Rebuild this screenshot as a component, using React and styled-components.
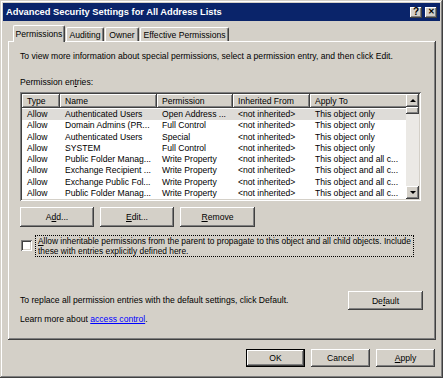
import React from 'react';
import styled, { createGlobalStyle, css } from 'styled-components';

const GlobalStyle = createGlobalStyle`
  body {
    margin: 0;
    background: #d4d0c8;
    font-family: 'Liberation Sans', Arial, sans-serif;
  }
`;

const raised = css`
  box-shadow: inset -1px -1px #404040, inset 1px 1px #ffffff, inset -2px -2px #808080, inset 2px 2px #d4d0c8;
`;

const sunken = css`
  box-shadow: inset 1px 1px #808080, inset -1px -1px #ffffff, inset 2px 2px #404040, inset -2px -2px #d4d0c8;
`;

const rows = [
  ['Allow', 'Authenticated Users', 'Open Address ...', '<not inherited>', 'This object only'],
  ['Allow', 'Domain Admins (PR...', 'Full Control', '<not inherited>', 'This object only'],
  ['Allow', 'Authenticated Users', 'Special', '<not inherited>', 'This object only'],
  ['Allow', 'SYSTEM', 'Full Control', '<not inherited>', 'This object only'],
  ['Allow', 'Public Folder Manag...', 'Write Property', '<not inherited>', 'This object and all c...'],
  ['Allow', 'Exchange Recipient ...', 'Write Property', '<not inherited>', 'This object and all c...'],
  ['Allow', 'Exchange Public Fol...', 'Write Property', '<not inherited>', 'This object and all c...'],
  ['Allow', 'Public Folder Manag...', 'Write Property', '<not inherited>', 'This object and all c...'],
  ['Allow', 'Exchange Recipient ...', 'Write Property', '<not inherited>', 'This object and all c...'],
];

const columns = [
  { label: 'Type', width: 38 },
  { label: 'Name', width: 97 },
  { label: 'Permission', width: 76 },
  { label: 'Inherited From', width: 77 },
  { label: 'Apply To', width: 98 },
];

const tabs = [
  { label: 'Permissions', width: 52, active: true },
  { label: 'Auditing', width: 38 },
  { label: 'Owner', width: 34 },
  { label: 'Effective Permissions', width: 89 },
];

const App = () => {
  return (
    <>
      <GlobalStyle />
      <Window>
        <TitleBar>
          <TitleText>Advanced Security Settings for All Address Lists</TitleText>
          <TitleButtons>
            <CaptionBtn>?</CaptionBtn>
            <CaptionBtn $close>✕</CaptionBtn>
          </TitleButtons>
        </TitleBar>

        <TabRow>
          {tabs.map((t) => (
            <Tab key={t.label} $active={t.active} $w={t.width}>
              {t.label}
            </Tab>
          ))}
        </TabRow>

        <Panel>
          <InfoText>
            To view more information about special permissions, select a permission entry, and then click Edit.
          </InfoText>
          <Label>
            Permission en<u>t</u>ries:
          </Label>

          <ListBox>
            <ListInner>
              <HeaderRow>
                {columns.map((c) => (
                  <HeaderCell key={c.label} $w={c.width}>
                    {c.label}
                  </HeaderCell>
                ))}
              </HeaderRow>
              <Rows>
                {rows.map((r, i) => (
                  <Row key={i} $selected={i === 0}>
                    {r.map((cell, j) => (
                      <Cell key={j} $w={columns[j].width}>
                        {cell}
                      </Cell>
                    ))}
                  </Row>
                ))}
              </Rows>
            </ListInner>
            <ScrollBar>
              <ScrollBtn>
                <Arrow $up />
              </ScrollBtn>
              <Thumb />
              <Track />
              <ScrollBtn>
                <Arrow />
              </ScrollBtn>
            </ScrollBar>
          </ListBox>

          <ButtonRow>
            <Button $w={74}>
              A<u>d</u>d...
            </Button>
            <Button $w={74}>
              <u>E</u>dit...
            </Button>
            <Button $w={75}>
              <u>R</u>emove
            </Button>
          </ButtonRow>

          <CheckRow>
            <CheckBox />
            <FocusLabel>
              <Line>
                <u>A</u>llow inheritable permissions from the parent to propagate to this object and all child objects. Include
              </Line>
              <Line>these with entries explicitly defined here.</Line>
            </FocusLabel>
          </CheckRow>

          <DefaultRow>
            <PlainText>To replace all permission entries with the default settings, click Default.</PlainText>
            <Button $w={75} $h={19}>
              De<u>f</u>ault
            </Button>
          </DefaultRow>

          <PlainText>
            Learn more about <Link>access control</Link>.
          </PlainText>
        </Panel>

        <Footer>
          <Button $w={59} $h={18} $default>
            OK
          </Button>
          <Button $w={59} $h={18}>
            Cancel
          </Button>
          <Button $w={59} $h={18}>
            <u>A</u>pply
          </Button>
        </Footer>
      </Window>
    </>
  );
};

export default App;

const Window = styled.div`
  width: 443px;
  height: 378px;
  box-sizing: border-box;
  padding: 3px;
  background: #d4d0c8;
  display: flex;
  flex-direction: column;
  font-size: 8.6px;
  color: #000;
  box-shadow: inset -1px -1px #404040, inset 1px 1px #d4d0c8, inset -2px -2px #808080, inset 2px 2px #ffffff;
`;

const TitleBar = styled.div`
  height: 18px;
  background: #0a246a;
  display: flex;
  align-items: center;
  justify-content: space-between;
  padding: 0 3px 0 3px;
`;

const TitleText = styled.span`
  color: #fff;
  font-weight: bold;
  font-size: 9.3px;
`;

const TitleButtons = styled.div`
  display: flex;
  gap: 3px;
`;

const CaptionBtn = styled.div`
  width: 12px;
  height: 11px;
  background: #d4d0c8;
  ${raised};
  display: flex;
  align-items: center;
  justify-content: center;
  font-weight: bold;
  font-size: ${({ $close }) => ($close ? '8px' : '10px')};
  line-height: 1;
`;

const TabRow = styled.div`
  display: flex;
  align-items: flex-end;
  height: 18px;
  margin-top: 2px;
  padding-left: 10px;
  position: relative;
  z-index: 1;
`;

const Tab = styled.div`
  width: ${({ $w }) => $w}px;
  height: ${({ $active }) => ($active ? 17 : 14)}px;
  margin-right: 1px;
  margin-bottom: ${({ $active }) => ($active ? -1 : 0)}px;
  box-sizing: border-box;
  background: #d4d0c8;
  border-top: 1px solid #fff;
  border-left: 1px solid #fff;
  border-right: 1px solid #404040;
  box-shadow: inset -1px 0 #808080;
  border-radius: 2px 2px 0 0;
  display: flex;
  align-items: center;
  justify-content: center;
  white-space: nowrap;
`;

const Panel = styled.div`
  margin: 0 4px 0 5px;
  height: 299px;
  box-sizing: border-box;
  padding: 10px 13px 0 12px;
  background: #d4d0c8;
  box-shadow: inset -1px -1px #404040, inset 1px 1px #ffffff, inset -2px -2px #808080;
  display: flex;
  flex-direction: column;
`;

const InfoText = styled.div`
  line-height: 11px;
  white-space: nowrap;
`;

const Label = styled.div`
  margin-top: 15px;
  line-height: 11px;
`;

const ListBox = styled.div`
  margin-top: 4px;
  width: 401px;
  height: 109px;
  box-sizing: border-box;
  padding: 2px;
  background: #fff;
  ${sunken};
  display: flex;
  overflow: hidden;
`;

const ListInner = styled.div`
  flex: 1;
  display: flex;
  flex-direction: column;
  overflow: hidden;
`;

const HeaderRow = styled.div`
  display: flex;
  height: 14px;
  flex-shrink: 0;
`;

const HeaderCell = styled.div`
  width: ${({ $w }) => $w}px;
  flex-shrink: 0;
  box-sizing: border-box;
  background: #d4d0c8;
  ${raised};
  padding-left: 5px;
  line-height: 14px;
  white-space: nowrap;
`;

const Rows = styled.div`
  padding-top: 1px;
`;

const Row = styled.div`
  display: flex;
  height: 11.3px;
  background: ${({ $selected }) => ($selected ? '#dedcd8' : 'transparent')};
`;

const Cell = styled.div`
  width: ${({ $w }) => $w}px;
  flex-shrink: 0;
  box-sizing: border-box;
  padding-left: 5px;
  line-height: 11.3px;
  white-space: nowrap;
  overflow: hidden;
`;

const ScrollBar = styled.div`
  width: 13px;
  flex-shrink: 0;
  display: flex;
  flex-direction: column;
  background: #ebe9e5;
`;

const ScrollBtn = styled.div`
  height: 13px;
  flex-shrink: 0;
  background: #d4d0c8;
  ${raised};
  display: flex;
  align-items: center;
  justify-content: center;
`;

const Arrow = styled.div`
  width: 0;
  height: 0;
  border-left: 3px solid transparent;
  border-right: 3px solid transparent;
  ${({ $up }) => ($up ? 'border-bottom: 3px solid #000;' : 'border-top: 3px solid #000;')}
`;

const Thumb = styled.div`
  height: 7px;
  flex-shrink: 0;
  background: #d4d0c8;
  ${raised};
`;

const Track = styled.div`
  flex: 1;
`;

const ButtonRow = styled.div`
  display: flex;
  gap: 6px;
  margin-top: 6px;
`;

const Button = styled.div`
  width: ${({ $w }) => $w}px;
  height: ${({ $h }) => $h || 20}px;
  flex-shrink: 0;
  box-sizing: border-box;
  background: #d4d0c8;
  ${raised};
  ${({ $default }) =>
    $default &&
    css`
      border: 1px solid #000;
      box-shadow: inset -1px -1px #404040, inset 1px 1px #ffffff, inset -2px -2px #808080;
    `}
  display: flex;
  align-items: center;
  justify-content: center;
`;

const CheckRow = styled.div`
  display: flex;
  align-items: flex-start;
  margin-top: 8px;
`;

const CheckBox = styled.div`
  width: 11px;
  height: 11px;
  margin: 5px 3px 0 1px;
  background: #fff;
  ${sunken};
`;

const FocusLabel = styled.div`
  border: 1px dotted #000;
  padding: 0 2px;
  line-height: 10px;
  font-size: 8.4px;
`;

const Line = styled.div`
  white-space: nowrap;
`;

const DefaultRow = styled.div`
  display: flex;
  justify-content: space-between;
  align-items: flex-start;
  margin-top: 34px;
`;

const PlainText = styled.div`
  line-height: 11px;
  margin-top: 4px;
  white-space: nowrap;
`;

const Link = styled.span`
  color: #0000ff;
  text-decoration: underline;
`;

const Footer = styled.div`
  display: flex;
  justify-content: flex-end;
  gap: 6px;
  margin-top: 9px;
  padding-right: 5px;
`;
